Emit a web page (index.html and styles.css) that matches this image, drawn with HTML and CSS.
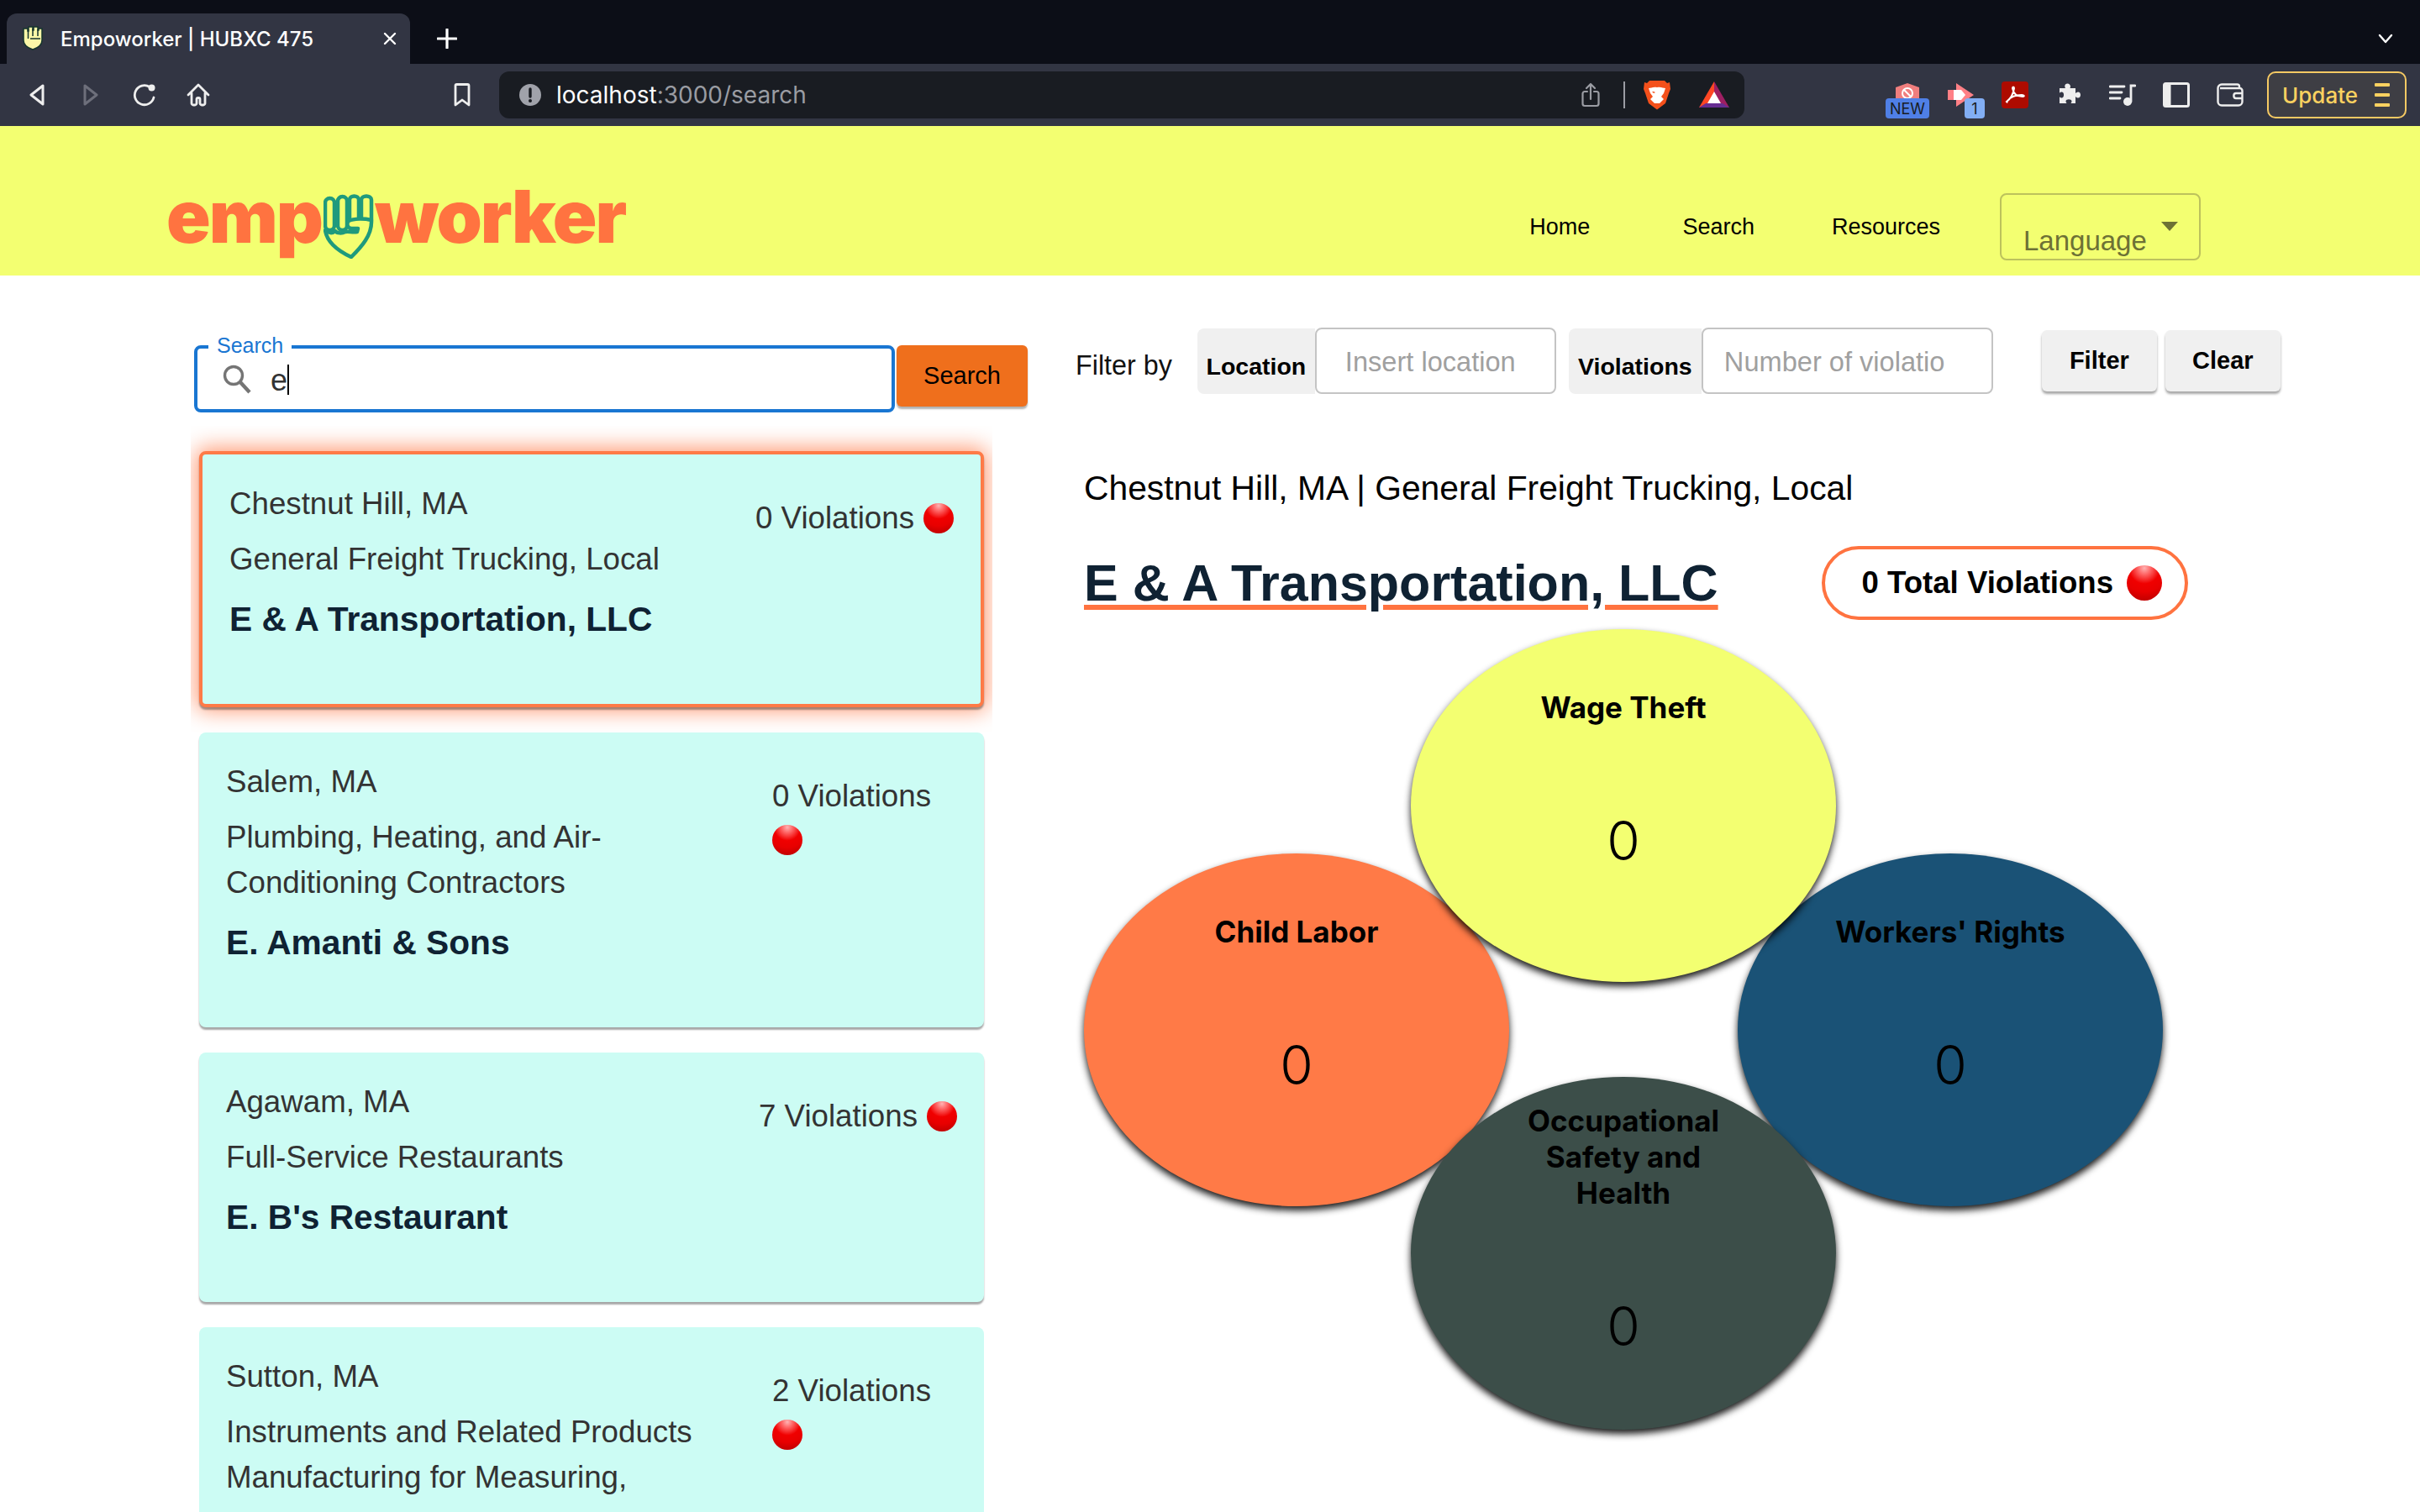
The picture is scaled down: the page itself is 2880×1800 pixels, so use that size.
FILE: index.html
```html
<!DOCTYPE html>
<html>
  <head>
    <title>Empoworker | HUBXC 475</title>
    <link rel="stylesheet" href="styles.css">
  </head>
  <body>
    <div class="tabstrip">
      <div class="tab">
        <svg class="fav" viewBox="0 0 26 30"><path d="M2 4h5v3h1V2h5v4h1V2h5v4h1V4h4v14c0 5-5 9-11 11C7 27 2 23 2 18z" fill="#fbf7a8" stroke="#16352e" stroke-width="1.5"/><path d="M7.500 5v11M13 4v9M19 5v8M10 16h12" stroke="#16352e" stroke-width="1.500" fill="none"/></svg>
        <span class="tab-title">Empoworker | HUBXC 475</span>
        <svg class="tab-close" viewBox="0 0 16 16"><path d="M2 2l12 12M14 2L2 14" stroke="#fff" stroke-width="2.400" stroke-linecap="round"/></svg>
      </div>
      <svg class="tab-plus" viewBox="0 0 24 24"><path d="M12 1v22M1 12h22" stroke="#fff" stroke-width="3.200" stroke-linecap="round"/></svg>
      <svg class="tab-chevron" viewBox="0 0 18 12"><path d="M2 2l7 8 7-8" stroke="#fff" stroke-width="2.400" fill="none" stroke-linecap="round" stroke-linejoin="round"/></svg>
    </div>

    <div class="toolbar">
      <div class="tb-group">
        <span class="tb-icon"><svg width="20" height="26" viewBox="0 0 20 26"><path d="M17 2v22L3 13z" fill="none" stroke="#eee" stroke-width="3" stroke-linejoin="round"/></svg></span>
        <span class="tb-icon"><svg width="20" height="26" viewBox="0 0 20 26"><path d="M3 2v22l14-11z" fill="none" stroke="#6d6f7b" stroke-width="3" stroke-linejoin="round"/></svg></span>
        <span class="tb-icon"><svg width="28" height="28" viewBox="0 0 28 28"><path d="M20 4.500A11.500 11.500 0 1 0 25 17" fill="none" stroke="#eee" stroke-width="2.800" stroke-linecap="round"/><circle cx="22.500" cy="5.500" r="4" fill="#eee"/></svg></span>
        <span class="tb-icon"><svg width="28" height="28" viewBox="0 0 28 28"><path d="M2 14L14 2l12 12M6 12v12c0 1 1 2 2 2h2c1 0 2-1 2-2v-5c0-2 4-2 4 0v5c0 1 1 2 2 2h2c1 0 2-1 2-2V12" fill="none" stroke="#eee" stroke-width="2.800" stroke-linecap="round" stroke-linejoin="round"/></svg></span>
      </div>
      <span class="tb-icon tb-bookmark"><svg width="20" height="28" viewBox="0 0 20 28"><path d="M2 3c0-1 .5-1.500 1.500-1.500h13c1 0 1.500.5 1.500 1.500v23l-8-6-8 6z" fill="none" stroke="#eee" stroke-width="2.800" stroke-linejoin="round"/></svg></span>
      <div class="urlbar">
        <svg class="url-info" width="26" height="26" viewBox="0 0 26 26"><circle cx="13" cy="13" r="13" fill="#a0a2aa"/><path d="M13 6v9" stroke="#191c22" stroke-width="3.400" stroke-linecap="round"/><circle cx="13" cy="20" r="2" fill="#191c22"/></svg>
        <span class="url-text">localhost<span class="url-dim">:3000/search</span></span>
        <div class="url-end">
          <svg width="22" height="30" viewBox="0 0 22 30"><path d="M7 11H4c-1.500 0-2.500 1-2.500 2.500v12c0 1.500 1 2.500 2.500 2.500h14c1.500 0 2.500-1 2.500-2.500v-12C20.500 12 19.500 11 18 11h-3M11 20V2M6 7l5-5 5 5" fill="none" stroke="#9a9ca3" stroke-width="2.200" stroke-linecap="round" stroke-linejoin="round"/></svg>
          <span class="url-sep"></span>
          <svg class="url-brave" width="32" height="36" viewBox="0 0 32 36"><path d="M7 1h18l3 3 3-1 1 8-2 5-4 12-10 7.500L6 28 2 16 0 11l1-8 3 1z" fill="#f4501b"/><path d="M6 10c3 0 5-2 10-1 5-1 7 1 10 1l-2 6-3 4 3 3-5 5h-6l-5-5 3-3-3-4zM10 14l2 2 2-1-2-1zM22 14l-2 2-2-1 2-1z" fill="#fff"/></svg>
          <svg class="url-bat" width="36" height="32" viewBox="0 0 36 32"><path d="M18 0L0 31h9l9-18z" fill="#ff4724"/><path d="M18 0l18 31h-9l-9-18z" fill="#9e1f63"/><path d="M0 31h36l-8-5H8z" fill="#662d91"/><path d="M18 12l8 14H10z" fill="#fff"/></svg>
        </div>
      </div>
      <div class="tb-group tb-ext">
        <span class="tb-icon">
          <svg width="32" height="32" viewBox="0 0 32 32"><path d="M16 2l14 5v14H2V7z" fill="#f07e7e"/><circle cx="16" cy="14" r="6" fill="none" stroke="#fff" stroke-width="2"/><path d="M12 10l8 8" stroke="#fff" stroke-width="2"/></svg>
          <span class="ext-badge ext-new">NEW</span>
        </span>
        <span class="tb-icon">
          <svg width="34" height="28" viewBox="0 0 34 28"><path d="M11 0l21 14-21 14v-8H1V8h10z" fill="#ff8086"/><path d="M8 8h9l5 6-5 6H8z" fill="#fff"/></svg>
          <span class="ext-badge ext-one">1</span>
        </span>
        <span class="tb-icon"><svg width="32" height="32" viewBox="0 0 32 32"><rect width="32" height="32" rx="4" fill="#ad0b00"/><path d="M6 24c4-3 8-9 9-16 0-2-2-2-2 0 1 6 5 10 12 10 3 0 2-2-1-2-6 0-13 2-17 7-1 2 0 2-1 1z" fill="none" stroke="#fff" stroke-width="2"/></svg></span>
        <span class="tb-icon"><svg width="30" height="30" viewBox="0 0 30 30"><path d="M11 2.500c2-2 6-1 6 2.500 0 1 -.5 1.500-.5 2H23v6c1-1 2-1.500 3-1.500 4 0 4 7 0 7-1 0-2-.5-3-1.500v8h-5.500c.5-1 1-1.500 1-2.500 0-3-7-3-7 0 0 1 .5 1.500 1 2.500H4v-7.500c1 .5 1.500 1 2.500 1 3.500 0 3.500-7 0-7-1 0-1.500.5-2.500 1V7h7c-1-2-1-3 0-4.500z" fill="#eee"/></svg></span>
        <span class="tb-icon"><svg width="32" height="26" viewBox="0 0 32 26"><path d="M1 3h17M1 10h14M1 17h12" stroke="#eee" stroke-width="2.800" stroke-linecap="round"/><path d="M26 21V2h5" stroke="#eee" stroke-width="2.800" fill="none" stroke-linecap="round"/><circle cx="22" cy="21" r="5" fill="#eee"/></svg></span>
        <span class="tb-icon"><svg width="32" height="30" viewBox="0 0 32 30"><rect x="1.500" y="1.500" width="29" height="27" rx="2" fill="none" stroke="#eee" stroke-width="3"/><rect x="1.500" y="1.500" width="8" height="27" fill="#eee"/></svg></span>
        <span class="tb-icon"><svg width="32" height="28" viewBox="0 0 32 28"><path d="M27 6V4c0-1.500-1-2.500-2.500-2.500H6C3.500 1.500 1.500 3.500 1.500 6v16c0 2.500 2 4.500 4.500 4.500h20c2.500 0 4.500-2 4.500-4.500V9c0-1.500-1.500-3-3-3H4" fill="none" stroke="#eee" stroke-width="2.400"/><path d="M30 12h-7c-3.500 0-3.500 6 0 6h7" fill="none" stroke="#eee" stroke-width="2.400"/></svg></span>
      </div>
      <div class="update-btn">
        <span>Update</span>
        <span class="update-menu"><i></i><i></i><i></i></span>
      </div>
    </div>

    <header class="site-header">
      <div class="logo">
        <span>emp</span>
        <svg class="logo-fist" viewBox="0 0 60 78">
          <g fill="none" stroke="#1f9a7d" stroke-width="4.500" stroke-linejoin="round" stroke-linecap="round">
            <rect x="2" y="6" width="11" height="38" rx="5.500"/>
            <rect x="17" y="4" width="11" height="40" rx="5.500"/>
            <path d="M31 31V8c0-6 11-6 11 0v22"/>
            <path d="M45 30V8c0-6 12-6 12 0v24"/>
            <path d="M57 32c-9-2-21-2-27 1-3 3-2 8 3 9h8l-1 4c-6 1-10-1-14 0-4 2-10 2-12-1-3 3-8 3-12-1 2 14 14 24 31 32 12-12 25-26 24-44z"/>
          </g>
        </svg>
        <span>worker</span>
      </div>
      <nav class="site-nav">
        <a class="nav-link">Home</a>
        <a class="nav-link nav-search">Search</a>
        <a class="nav-link nav-resources">Resources</a>
        <div class="lang-select">
          <span>Language</span>
          <i class="lang-caret"></i>
        </div>
      </nav>
    </header>

    <main class="page">
      <section class="results">
        <div class="search-row">
          <div class="search-field">
            <label class="search-label">Search</label>
            <svg class="search-icon" width="36" height="36" viewBox="0 0 36 36"><circle cx="14" cy="14" r="10.500" fill="none" stroke="#757575" stroke-width="3.400"/><path d="M22 22l11 12" stroke="#757575" stroke-width="4.400"/></svg>
            <span class="search-value">e</span><i class="search-caret"></i>
          </div>
          <button class="search-btn">Search</button>
        </div>

        <div class="cards">
          <article class="card card-active">
            <div class="card-main">
              <p class="card-line">Chestnut Hill, MA</p>
              <p class="card-line">General Freight Trucking, Local</p>
              <h3 class="card-name">E &amp; A Transportation, LLC</h3>
            </div>
            <div class="card-count"><span>0 Violations</span><i class="dot"></i></div>
          </article>
          <article class="card">
            <div class="card-main">
              <p class="card-line">Salem, MA</p>
              <p class="card-line">Plumbing, Heating, and Air-<br>Conditioning Contractors</p>
              <h3 class="card-name">E. Amanti &amp; Sons</h3>
            </div>
            <div class="card-count stacked"><span>0 Violations</span><i class="dot"></i></div>
          </article>
          <article class="card">
            <div class="card-main">
              <p class="card-line">Agawam, MA</p>
              <p class="card-line">Full-Service Restaurants</p>
              <h3 class="card-name">E. B's Restaurant</h3>
            </div>
            <div class="card-count"><span>7 Violations</span><i class="dot"></i></div>
          </article>
          <article class="card card-cut">
            <div class="card-main">
              <p class="card-line">Sutton, MA</p>
              <p class="card-line">Instruments and Related Products<br>Manufacturing for Measuring,</p>
            </div>
            <div class="card-count stacked"><span>2 Violations</span><i class="dot"></i></div>
          </article>
        </div>
      </section>

      <section class="detail">
        <div class="filter-row">
          <span class="filter-by">Filter by</span>
          <span class="addon addon-loc">Location</span>
          <span class="filter-input input-loc">Insert location</span>
          <span class="addon addon-vio">Violations</span>
          <span class="filter-input input-vio">Number of violatio</span>
          <button class="grey-btn btn-filter">Filter</button>
          <button class="grey-btn btn-clear">Clear</button>
        </div>

        <div class="detail-body">
          <p class="detail-sub">Chestnut Hill, MA | General Freight Trucking, Local</p>
          <div class="detail-head">
            <h1 class="detail-name">E &amp; A Transportation, LLC</h1>
            <div class="total-pill"><span>0 Total Violations</span><i class="dot dot-big"></i></div>
          </div>

          <div class="bubbles">
            <div class="bubble bubble-child"><div class="bubble-label">Child Labor</div><div class="bubble-num">0</div></div>
            <div class="bubble bubble-rights"><div class="bubble-label">Workers' Rights</div><div class="bubble-num">0</div></div>
            <div class="bubble bubble-wage"><div class="bubble-label">Wage Theft</div><div class="bubble-num">0</div></div>
            <div class="bubble bubble-osha"><div class="bubble-label">Occupational Safety and Health</div><div class="bubble-num">0</div></div>
          </div>
        </div>
      </section>
    </main>
  </body>
</html>
```

FILE: styles.css
```css
html, body { margin: 0; height: 1800px; overflow: hidden; background: #fff; font-family: "Liberation Sans", Arial, sans-serif; }

/* browser chrome */
.tabstrip { display: flex; align-items: flex-end; height: 76px; box-sizing: border-box; padding-left: 8px; background: #0c0e17; }
.tab { display: flex; align-items: center; width: 480px; height: 60px; box-sizing: border-box; padding: 0 16px 0 18px; background: #323543; border-radius: 12px 12px 0 0; }
.fav { width: 26px; height: 30px; margin-top: -3px; }
.tab-title { margin: 0 0 0 20px; font: 500 24px "Inter", sans-serif; color: #fff; }
.tab-close { width: 16px; height: 16px; margin: 0 0 0 auto; }
.tab-plus { width: 24px; height: 24px; margin: 0 0 18px 32px; }
.tab-chevron { width: 18px; height: 12px; margin: 0 32px 24px auto; }

.toolbar { display: flex; align-items: center; height: 74px; padding-left: 12px; background: #323543; }
.tb-group { display: flex; }
.tb-icon { position: relative; display: flex; align-items: center; justify-content: center; width: 64px; height: 56px; }
.tb-bookmark { margin-left: 250px; }
.urlbar { display: flex; align-items: center; width: 1482px; height: 56px; margin-left: 12px; box-sizing: border-box; padding: 0 18px 0 24px; background: #191c22; border-radius: 12px; }
.url-text { margin-left: 18px; font: 400 28px "Inter", sans-serif; color: #fff; }
.url-dim { color: #9a9ca3; }
.url-end { display: flex; align-items: center; margin-left: auto; }
.url-sep { width: 2px; height: 32px; margin: 0 22px 0 28px; background: #9a9ca3; }
.url-bat { margin-left: 34px; }
.tb-ext { margin-left: 162px; }
.ext-badge { position: absolute; bottom: 0; height: 24px; border-radius: 4px; font: 400 18px/25px "Inter", sans-serif; color: #191c22; text-align: center; }
.ext-new { left: 6px; width: 52px; background: #4f7fe6; }
.ext-one { left: 36px; width: 24px; background: #82aef4; }
.update-btn { display: flex; align-items: center; justify-content: space-between; width: 166px; height: 56px; margin-left: 12px; box-sizing: border-box; padding: 0 18px 0 16px; background: #3e3e44; border: 2px solid #f5c963; border-radius: 10px; font: 500 26px "Inter", sans-serif; color: #fbd160; }
.update-menu { display: flex; flex-direction: column; gap: 8px; }
.update-menu i { display: block; width: 18px; height: 4px; background: #fbd160; border-radius: 1px; }

/* site header */
.site-header { display: flex; align-items: center; justify-content: space-between; height: 178px; box-sizing: border-box; padding: 0 261px 0 198px; background: #f3ff71; }
.logo { display: flex; align-items: center; margin-top: 36px; font: 900 87px/1 "Inter", sans-serif; letter-spacing: -2px; color: #ff7340; }
.logo-fist { width: 60px; height: 78px; margin: 24px 1px 0 2px; flex: none; }
.site-nav { display: flex; align-items: center; margin-top: 62px; }
.nav-link { font-size: 27px; color: #000; }
.nav-search { margin-left: 110px; }
.nav-resources { margin-left: 92px; }
.lang-select { display: flex; align-items: flex-start; justify-content: space-between; width: 239px; height: 80px; margin-left: 71px; box-sizing: border-box; padding: 36px 25px 0 26px; border: 2px solid #bcc25c; border-radius: 8px; font-size: 33px; color: #6d7135; }
.lang-caret { width: 0; height: 0; margin-top: -4px; border: 10px solid transparent; border-top: 11px solid #6d7135; border-bottom: 0; }

/* layout */
.page { display: flex; height: 1472px; box-sizing: border-box; padding: 62px 0 0 231px; overflow: hidden; }
.results { width: 992px; flex: none; margin-top: 21px; }
.detail { margin-left: 57px; flex: 1; }

/* left column */
.search-row { display: flex; gap: 2px; align-items: flex-start; }
.search-field { position: relative; display: flex; align-items: center; width: 834px; height: 80px; box-sizing: border-box; padding-left: 29px; border: 4px solid #1976d2; border-radius: 8px; }
.search-label { position: absolute; left: 13px; top: -19px; padding: 0 10px; background: #fff; font-size: 25px; line-height: 30px; color: #1976d2; }
.search-value { margin: 4px 0 0 22px; font-size: 36px; color: #333; }
.search-caret { width: 2px; height: 36px; margin-top: 2px; background: #000; }
.search-btn { width: 156px; height: 73px; padding: 0; background: #ef6f1c; border: 0; border-radius: 6px; box-shadow: 0 3px 2px rgba(0,0,0,.3); font: 29px "Liberation Sans", Arial, sans-serif; color: #000; }

.cards { display: flex; flex-direction: column; gap: 30px; width: 934px; margin: 46px 0 0 6px; }
.card { display: flex; justify-content: space-between; box-sizing: border-box; padding: 32px; background: #ccfcf4; border-radius: 8px; box-shadow: 0 3px 2px rgba(0,0,0,.35); color: #333; }
.card-active { border: 4px solid #ff7a47; box-shadow: 0 3px 2px rgba(0,0,0,.35), 0 0 26px 4px rgba(255,122,71,.75); clip-path: inset(-30px -10px -30px -10px); }
.card-main { width: 600px; padding-bottom: 42px; }
.card-line { margin: 0 0 12px; font-size: 36.700px; line-height: 54px; }
.card-name { margin: 17px 0 0; font-size: 40.700px; line-height: 54px; font-weight: 700; color: #0f2233; }
.card-count { display: flex; align-items: center; gap: 11px; height: 54px; margin-top: 17px; font-size: 36.700px; line-height: 54px; }
.card-count.stacked { flex-direction: column; align-items: flex-start; gap: 0; width: 220px; height: auto; }
.card-count.stacked .dot { margin-top: 7px; }
.card-cut { height: 220px; overflow: hidden; border-radius: 8px 8px 0 0; box-shadow: none; }

.dot { display: block; width: 36px; height: 36px; flex: none; border-radius: 50%; background: radial-gradient(circle at 50% 8%, #ffb3b3 0, #ff6b6b 16%, #f00000 42%, #e80000 64%, #b00000 100%); }
.dot-big { width: 42px; height: 42px; }

/* right column */
.filter-row { display: flex; align-items: flex-start; height: 79px; }
.filter-by { align-self: center; margin-top: 11px; font-size: 32.300px; color: #111; }
.addon { display: flex; align-items: flex-end; justify-content: center; height: 78px; box-sizing: border-box; padding-bottom: 16px; margin-top: 1px; background: #f0f0f0; border-radius: 8px 0 0 8px; font-size: 28.500px; font-weight: 700; color: #000; }
.addon-loc { width: 140px; margin-left: 30px; }
.addon-vio { width: 158px; margin-left: 15px; }
.filter-input { height: 79px; box-sizing: border-box; padding: 20px 0 0 34px; background: #fff; border: 2px solid #c4c4c4; border-radius: 8px; font-size: 32.600px; color: #a0a0a0; }
.input-loc { width: 287px; }
.input-vio { width: 347px; padding-left: 25px; }
.grey-btn { width: 137px; height: 73px; margin-top: 3px; padding: 0; background: #f0f0f0; border: 0; border-radius: 6px; box-shadow: 0 3px 3px rgba(0,0,0,.35); font: 700 29px "Liberation Sans", Arial, sans-serif; color: #000; }
.btn-filter { margin-left: 58px; }
.btn-clear { margin-left: 10px; }

.detail-body { padding-left: 10px; }
.detail-sub { margin: 87px 0 0; font-size: 40.800px; line-height: 50px; color: #000; }
.detail-head { display: flex; align-items: center; justify-content: flex-start; margin-top: 44px; }
.detail-name { margin: 0; font-size: 61px; line-height: 88px; font-weight: 700; color: #0f2233; text-decoration: underline 6px #ff7340; text-underline-offset: 5px; }
.total-pill { display: flex; align-items: center; gap: 16px; height: 88px; margin-left: 123px; box-sizing: border-box; padding: 0 27px 0 44px; border: 4px solid #ff7340; border-radius: 44px; font-size: 36.600px; font-weight: 700; color: #000; }

/* the four circles overlap, so they sit on a small canvas */
.bubbles { position: relative; width: 1284px; height: 960px; margin-top: 11px; }
.bubble { position: absolute; display: flex; flex-direction: column; align-items: center; width: 506px; height: 420px; box-sizing: border-box; padding: 72px 100px 0; border-radius: 50%; box-shadow: 0 5px 8px rgba(0,0,0,.9); color: #000; text-align: center; font-family: "Inter", sans-serif; }
.bubble-label { font-size: 35px; line-height: 43px; font-weight: 700; }
.bubble-num { margin-top: 105px; font-size: 64px; line-height: 64px; font-weight: 300; }
.bubble-child { left: 0; top: 267px; background: #ff7a47; }
.bubble-rights { left: 778px; top: 267px; background: #1a5276; }
.bubble-wage { left: 389px; top: 0; background: #f3ff71; }
.bubble-osha { left: 389px; top: 533px; padding: 31px 125px 0; background: #3c4e49; }
```
